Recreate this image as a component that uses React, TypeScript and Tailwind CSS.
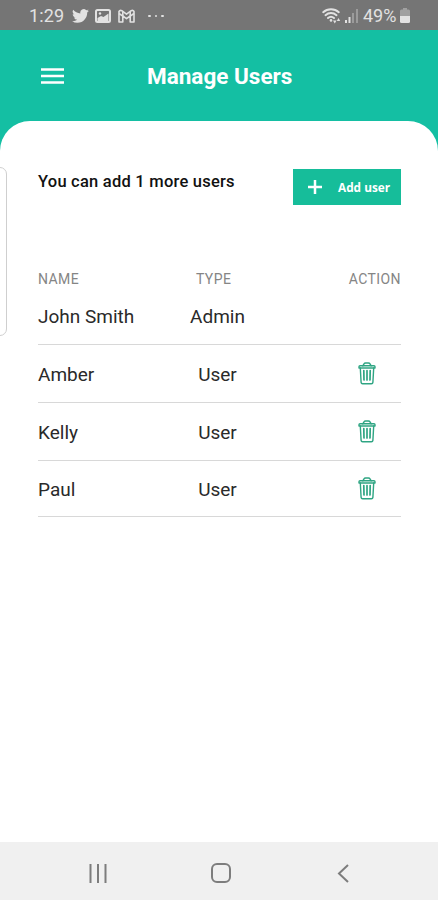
import React from 'react';

const users = [
  { name: 'John Smith', type: 'Admin', removable: false, row: 'h-[57px]' },
  { name: 'Amber', type: 'User', removable: true, row: 'h-[58px]' },
  { name: 'Kelly', type: 'User', removable: true, row: 'h-[58px]' },
  { name: 'Paul', type: 'User', removable: true, row: 'h-[56px]' },
];

const TwitterIcon: React.FC = () => (
  <svg viewBox="0 2 24 20" className="w-[17px] h-[14px]" fill="currentColor">
    <path d="M23.95 4.57a10 10 0 0 1-2.82.77 4.96 4.96 0 0 0 2.16-2.72c-.95.55-2 .96-3.13 1.18a4.92 4.92 0 0 0-8.38 4.48C7.69 8.1 4.07 6.13 1.64 3.16a4.9 4.9 0 0 0 1.52 6.57 4.9 4.9 0 0 1-2.23-.61v.06a4.92 4.92 0 0 0 3.95 4.83 5 5 0 0 1-2.21.08 4.94 4.94 0 0 0 4.6 3.42A9.87 9.87 0 0 1 0 19.54a14 14 0 0 0 7.55 2.21c9.05 0 14-7.5 14-13.98 0-.21 0-.42-.02-.63a9.9 9.9 0 0 0 2.42-2.57z" />
  </svg>
);

const PictureIcon: React.FC = () => (
  <svg viewBox="0 0 16 14" className="w-4 h-[14px]" fill="none" stroke="currentColor">
    <rect x="1" y="1" width="14" height="12" rx="1.5" strokeWidth="2" />
    <path d="M2.5 12V9L6 7l2.5 1L13.5 4.5V12z" fill="currentColor" stroke="none" />
    <circle cx="5" cy="4.5" r="1.2" fill="currentColor" stroke="none" />
  </svg>
);

const MailIcon: React.FC = () => (
  <svg viewBox="0 0 17 14" className="w-[17px] h-[14px]" fill="none" stroke="currentColor" strokeWidth="1.6" strokeLinejoin="round">
    <path d="M1 2.5Q2 .7 3.8 1.7L8.5 5.2l4.7-3.5Q15 .7 16 2.5V13h-3.800V7L8.500 9.700 4.800 7v6H1z" />
    <path d="M4.8 7V2.500M12.200 7V2.500M1 4.500l3.800 2.600M16 4.500l-3.800 2.600" />
  </svg>
);

const WifiIcon: React.FC = () => (
  <svg viewBox="0 0 20 16" className="w-5 h-4" fill="none" stroke="currentColor" strokeWidth="1.9" strokeLinecap="round">
    <path d="M1.2 4.2C5.5.2 12.5.2 16.8 4.2M3.5 7.2c3.2-2.9 7.8-2.9 11 0M6 10c1.8-1.6 4.2-1.6 6 0" />
    <circle cx="9" cy="12.4" r="1.3" fill="currentColor" stroke="none" />
    <path d="M11 12.5h3.5L12.8 15.5zM14.8 13h3.4L16.5 10z" fill="currentColor" stroke="none" />
  </svg>
);

const SignalIcon: React.FC = () => (
  <svg viewBox="0 0 14 14" className="w-[14px] h-[14px]" fill="currentColor">
    <rect x="0" y="11" width="2" height="3" />
    <rect x="3.5" y="8" width="2" height="6" />
    <rect x="7" y="4" width="2" height="10" opacity=".35" />
    <rect x="11" y="0" width="2" height="14" opacity=".35" />
  </svg>
);

const BatteryIcon: React.FC = () => (
  <svg viewBox="0 0 10 15" className="w-[10px] h-[15px]" fill="currentColor">
    <path d="M3 0h4v1.5h1.5Q10 1.5 10 3v5H0V3q0-1.5 1.5-1.5H3z" opacity=".4" />
    <path d="M0 8h10v5.5Q10 15 8.5 15h-7Q0 15 0 13.5z" />
  </svg>
);

const TrashIcon: React.FC = () => (
  <svg viewBox="0 0 18 23" className="w-[18px] h-[23px]" fill="none" stroke="#2fa583" strokeWidth="1.4" strokeLinejoin="round" strokeLinecap="round">
    <path d="M4.8 3.8L6 1.8Q6.5 1 7.5 1h3Q11.5 1 12 1.8l1.2 2" />
    <path d="M1 6V4.8Q1 3.8 2 3.8h14q1 0 1 1V6z" />
    <path d="M2.300 6l.8 14.400q.1 1.400 1.500 1.400h8.800q1.400 0 1.500-1.400L15.700 6" />
    <path d="M5.800 8.500l.2 9.500M9 8.500V18M12.200 8.500L12 18" strokeWidth="1.7" />
  </svg>
);

const App: React.FC = () => {
  return (
    <div className="w-full h-screen flex flex-col overflow-hidden bg-[#14bfa3] font-['Roboto',sans-serif]">
      {/* Status bar */}
      <div className="h-[29.5px] shrink-0 bg-[#757575] text-[#e2e2e2] flex items-center justify-between pl-[29px] pr-[28px] pt-[2px]">
        <div className="flex items-center">
          <span className="w-[43px] text-[18px] leading-5 tracking-[0.1px]">1:29</span>
          <TwitterIcon />
          <span className="w-[6px]" />
          <PictureIcon />
          <span className="w-[7px]" />
          <MailIcon />
          <span className="ml-[13px] flex gap-1">
            <i className="size-[2.5px] rounded-full bg-current" />
            <i className="size-[2.5px] rounded-full bg-current" />
            <i className="size-[2.5px] rounded-full bg-current" />
          </span>
        </div>
        <div className="flex items-center">
          <WifiIcon />
          <span className="w-[3px]" />
          <SignalIcon />
          <span className="ml-[4px] w-[37px] text-[18px] leading-5">49%</span>
          <BatteryIcon />
        </div>
      </div>

      {/* Header */}
      <header className="h-[91.5px] shrink-0 flex items-center pl-[41px] pt-[1px] text-white">
        <div className="w-[106px]">
          <svg viewBox="0 0 23 16" className="w-[23px] h-4" stroke="currentColor" strokeWidth="2.7">
            <path d="M0 1.5h23M0 8h23M0 14.5h23" />
          </svg>
        </div>
        <h1 className="text-[22.5px] leading-7 font-bold whitespace-nowrap pt-[1px]">Manage Users</h1>
      </header>

      <main className="relative flex-1 bg-white rounded-t-[30px] pl-[38px] pr-[37px]">
        {/* Edge panel handle */}
        <div className="absolute left-[-8px] top-[46px] w-[15px] h-[169px] rounded-[7px] border border-[#cfcfcf]" />

        <div className="pt-[48px] flex justify-between items-start">
          <p className="pt-[3px] text-[16.5px] leading-5 font-medium tracking-[0.23px] text-[#111] whitespace-nowrap">You can add 1 more users</p>
          <button className="w-[108px] h-[36px] bg-[#16bd9a] text-white flex items-center pl-[15px]">
            <svg viewBox="0 0 14 14" className="w-[14px] h-[14px]" stroke="currentColor" strokeWidth="2.5">
              <path d="M7 0v14M0 7h14" />
            </svg>
            <span className="ml-4 text-[11.8px] leading-4 font-bold font-['Open_Sans',sans-serif] whitespace-nowrap">Add user</span>
          </button>
        </div>

        <div className="mt-[65px] h-[18px] flex items-center text-[14px] tracking-[0.4px] text-[#858585]">
          <span className="w-[158px]">NAME</span>
          <span className="flex-1">TYPE</span>
          <span>ACTION</span>
        </div>
        <div>
          {users.map((user) => (
            <div key={user.name} className={`${user.row} flex items-center border-b border-[#d8d8d8] text-[19px] text-[#2a2a2a]`}>
              <span className="w-[134px] pt-[3px]">{user.name}</span>
              <span className="w-[91px] pt-[3px] text-center">{user.type}</span>
              <span className="ml-[95px]">{user.removable && <TrashIcon />}</span>
            </div>
          ))}
        </div>
      </main>

      {/* Navigation bar */}
      <nav className="h-[58px] shrink-0 bg-[#f0f0f0] text-[#7d7d7d] flex items-center pl-[89px] pt-[4px]">
        <svg viewBox="0 0 18 19" className="w-[18px] h-[19px]" stroke="currentColor" strokeWidth="2">
          <path d="M1.5 0v19M9 0v19M16.5 0v19" />
        </svg>
        <svg viewBox="0 0 20 20" className="ml-[104px] w-5 h-5" fill="none" stroke="currentColor" strokeWidth="2">
          <rect x="1" y="1" width="18" height="18" rx="5" />
        </svg>
        <svg viewBox="0 0 12 19" className="ml-[106px] w-3 h-[19px]" fill="none" stroke="currentColor" strokeWidth="2">
          <path d="M11 1L2 9.5l9 8.5" />
        </svg>
      </nav>
    </div>
  );
};

export default App;
